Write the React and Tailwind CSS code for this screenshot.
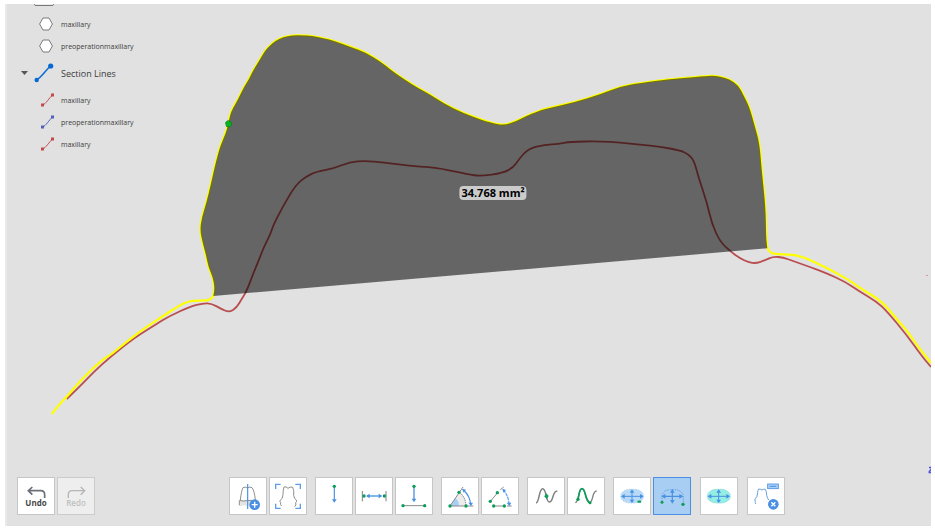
import React from "react";

const BLUE = "#4a90e2";
const GREEN = "#0a9d58";
const GRAY = "#8a8a8a";

const TAIL_LEFT =
  "51.7,414 60,403.5 66.7,397 80,381 101.7,360 110,355.5 130,339 146.7,326.7 163.3,316 180,305 186,302.3 193,300.7 206.7,300.7 211,299";

const OUTLINE =
  "213.3,296 214.3,291 214.3,286 213,278 208.3,266.7 206,255 202.7,243 200,230 201.7,218 206.7,201.7 210.7,185 214,170 217.3,156.7 220,146.7 225.7,133.3 228.3,124 230,115 232.7,108.3 238.3,99 244,86.7 249,79.3 252.3,71.7 260,59.3 265,50.7 270,45.5 275,41 283.3,37 292,35.5 301.7,35.2 312,36 323.3,38 335,41 351.7,47.3 365,52 381.7,62.3 390,69.3 404,79.3 420,89 430,94.3 443.3,103.3 463.3,113 483.3,120.3 495,123.9 505,125 515,121.7 526.7,115.7 536.7,111.7 545,108.7 573.3,102.7 600,94.3 620,86.5 640,83 670,79 696.7,77 711.7,75.6 720,76.5 730,79.6 738.3,85.2 743.3,95 749.3,106.7 755,126.7 759.5,143.3 761.7,170 765.7,208.3 766,236.7 767.3,248.3";

const TAIL_RIGHT =
  "770,252 773.3,254 793,254.7 801,256.5 810,260 830,269.5 850,280.7 860,288 876.7,298 886.7,306.7 896.7,319.3 906.7,330 916.7,345 931,363";

const RED_LINE =
  "66.7,399 78.3,388 93,372.7 111.7,355.7 135,337.3 155,325 170,315.7 190,306.7 203.3,303.1 211.7,303.5 221.7,309.3 229.3,312.2 236.7,307.6 241.7,299 246.7,291 253.3,273.3 260,257.3 263.3,248.3 270.7,233.3 273.3,225 283.3,205.7 296,184.500 306.7,176.2 316.7,171.5 333.3,168.7 350,161.8 365,160.8 383.3,162.3 410,166 430,167.3 440,168.3 468.3,174.3 480,176.2 503.3,173 513.3,167.3 518.3,160 528.3,148.500 545,144.7 558.3,144 570,141.7 600,141.3 620,142.5 640,144.7 660,146.7 680,150.3 688.3,154.300 694,160.300 698.3,176.7 706.7,201.7 711.7,223.3 720,241.7 730.7,251.7 740,258.3 748.3,262.3 756,263.400 765,260.3 773.3,256.500 783.3,257.5 793,261 810,267 826.7,273.3 845,281.7 860,291.7 876.7,301.7 886.7,311 906.7,335 921.7,356 931,367";

// Rounds a traced polyline by running quadratic segments through its midpoints.
function smooth(points) {
  const p = points.split(" ").map((pair) => pair.split(",").map(Number));
  let d = `M${p[0][0]} ${p[0][1]}`;
  for (let i = 1; i < p.length - 1; i++) {
    const mx = (p[i][0] + p[i + 1][0]) / 2;
    const my = (p[i][1] + p[i + 1][1]) / 2;
    d += `Q${p[i][0]} ${p[i][1]} ${mx} ${my}`;
  }
  const last = p[p.length - 1];
  return `${d}L${last[0]} ${last[1]}`;
}

function SectionDrawing() {
  return (
    <svg
      className="absolute inset-0 h-full w-full"
      viewBox="5 4 926 522"
      preserveAspectRatio="xMidYMid slice"
      fill="none"
      strokeLinejoin="round"
      aria-hidden="true"
    >
      <path d={smooth(RED_LINE)} stroke="#b94e50" strokeWidth="1.800" />
      <path d={smooth(`${TAIL_LEFT} ${OUTLINE} ${TAIL_RIGHT}`)} stroke="#ffff00" strokeWidth="2.200" />
      <path d={`${smooth(OUTLINE)}Z`} fill="#000" fillOpacity="0.55" />
      <path d="M225.500 122.500l2.500-2 3 1.500.500 3-2 2-3-.500z" fill="#04b81c" stroke="#067a16" strokeWidth=".7" />
      <path d="M926 275.500h2" stroke="#d39a9a" strokeWidth="1" />
      <path d="M929 467.500h4M932 468l-3 4M928.500 472.500h4" stroke="#5050e6" strokeWidth="1.400" />
    </svg>
  );
}

function MeshIcon() {
  return (
    <svg className="h-4 w-4 shrink-0" viewBox="0 0 16 16" aria-hidden="true">
      <path d="M4 2h6l3.400 6-3.400 6H4L.6 8z" fill="#fff" stroke="#7b7b7b" strokeWidth="1" />
    </svg>
  );
}

function LineIcon({ color }) {
  return (
    <svg className="h-4 w-4 shrink-0" viewBox="0 0 16 16" fill="none" aria-hidden="true">
      <path d="M3.500 13C7 12 10 6 13.500 3" stroke={color} strokeWidth="1" />
      <rect x="2" y="11.500" width="3" height="3" fill={color} />
      <rect x="12" y="1.500" width="3" height="3" fill={color} />
    </svg>
  );
}

function TreeItem({ icon, children }) {
  return (
    <li className="flex h-[22px] items-center gap-[6px] pl-[34px] text-[7px] leading-none">
      {icon}
      <span>{children}</span>
    </li>
  );
}

function Tree() {
  return (
    <nav aria-label="Data tree" className="relative text-[#3c3c3c]">
      <div className="h-[9px] overflow-hidden pl-[29px]">
        <svg className="block h-[2px] w-5" viewBox="0 0 20 2" fill="none" aria-hidden="true">
          <path d="M.5 0V.5Q.5 1.500 2 1.500H18Q19.500 1.500 19.500 .5V0" fill="#ededed" stroke="#777" />
        </svg>
      </div>
      <ul>
        <TreeItem icon={<MeshIcon />}>maxillary</TreeItem>
        <TreeItem icon={<MeshIcon />}>preoperationmaxillary</TreeItem>
      </ul>
      <div className="flex h-8 items-center pl-4">
        <button type="button" aria-label="Collapse Section Lines" aria-expanded="true" className="flex w-[13px]">
          <svg className="h-1 w-[7px]" viewBox="0 0 7 4" aria-hidden="true">
            <path d="M0 0h7L3.500 4z" fill="#555" />
          </svg>
        </button>
        <svg className="h-5 w-5 shrink-0" viewBox="0 0 20 20" fill="none" aria-hidden="true">
          <path d="M2.500 17C7 15 12 7 16.500 3" stroke="#0d6fd6" strokeWidth="1.600" />
          <circle cx="2.700" cy="17" r="2.200" fill="#0668d2" />
          <circle cx="16.700" cy="3" r="2.600" fill="#0668d2" />
        </svg>
        <span className="pl-[7px] text-[9px] leading-none">Section Lines</span>
      </div>
      <ul>
        <TreeItem icon={<LineIcon color="#c24a4a" />}>maxillary</TreeItem>
        <TreeItem icon={<LineIcon color="#5560b8" />}>preoperationmaxillary</TreeItem>
        <TreeItem icon={<LineIcon color="#c24a4a" />}>maxillary</TreeItem>
      </ul>
    </nav>
  );
}

function Dot({ x, y, r = 5 }) {
  return <circle cx={x} cy={y} r={r} fill={GREEN} />;
}

const TOOLS = [
  [
    {
      label: "Add section",
      box: "30 24 108 108",
      art: (
        <>
          <path d="M59 91h46v15q-12 4-24 1-12-2-22 1z" fill="#e4e4e4" />
          <path d="M58 91q12 4 24 1 12-2 25 1M61 90q3-28 8-37 7-4 13 1 7-5 14-1 7 8 10 37M58 92v14" stroke="#777" strokeWidth="2.500" />
          <path d="M83 42v75" stroke={BLUE} strokeWidth="3.500" />
          <circle cx="104" cy="104" r="16" fill={BLUE} />
          <path d="M104 95v18M95 104h18" stroke="#fff" strokeWidth="4" />
        </>
      ),
    },
    {
      label: "Fit section to view",
      box: "147 24 108 108",
      art: (
        <>
          <path d="M164 57V43h15M223 43h15v14M238 101v14h-15M179 115h-15v-14" stroke="#5b9eea" strokeWidth="4" />
          <path d="M182 108q-5-4-3-10-4-2-1-8 7-2 8-16 0-16 3-23 6-3 12 4 7-6 14-3 5 8 3 24 2 12 8 14 2 5-2 8 3 8-3 12" stroke="#777" strokeWidth="2.500" />
        </>
      ),
    },
  ],
  [
    {
      label: "Vertical distance",
      box: "288 24 108 108",
      art: (
        <>
          <path d="M343 50v44" stroke={BLUE} strokeWidth="3.500" />
          <path d="M336 88h14l-7 10z" fill={BLUE} />
          <Dot x="343" y="49" />
        </>
      ),
    },
    {
      label: "Horizontal distance",
      box: "16 24 108 108",
      art: (
        <>
          <path d="M35 63v31M106 63v31" stroke="#666" strokeWidth="2.500" />
          <path d="M49 78h42" stroke={BLUE} strokeWidth="4" />
          <path d="M57 71v14l-11-7zM84 71v14l11-7z" fill={BLUE} />
          <Dot x="40" y="78" />
          <Dot x="101" y="78" />
        </>
      ),
    },
    {
      label: "Point to line distance",
      box: "134 24 108 108",
      art: (
        <>
          <path d="M155 107h65" stroke={GRAY} strokeWidth="3" />
          <path d="M188 50v42" stroke={BLUE} strokeWidth="4" />
          <path d="M181 86h14l-7 11z" fill={BLUE} />
          <Dot x="188" y="49" />
          <Dot x="155" y="107" />
          <Dot x="220" y="107" />
        </>
      ),
    },
  ],
  [
    {
      label: "Three point angle",
      box: "275 24 108 108",
      art: (
        <>
          <path d="M300 108l27-41q19 12 20 41z" fill="#ececec" />
          <path d="M300 108l15-24q11 8 11 24z" fill="#a6cff5" />
          <path d="M299 108l39-57M299 108h70" stroke={GRAY} strokeWidth="3" />
          <path d="M327 67q19 14 20 41" stroke="#666" strokeWidth="3" strokeDasharray="4 3" />
          <path d="M339 60q20 17 22 44" stroke={BLUE} strokeWidth="3.500" />
          <path d="M335 56l12 3-7 9zM354 98h14l-6 10z" fill={BLUE} />
          <Dot x="299" y="108" />
          <Dot x="326" y="67" />
          <Dot x="347" y="108" />
        </>
      ),
    },
    {
      label: "Four point angle",
      box: "393 24 108 108",
      art: (
        <>
          <path d="M418 94l22-26M448 59l10-8M428 108h32M468 108h14" stroke={GRAY} strokeWidth="3" />
          <path d="M457 60q15 17 17 40" stroke="#5b9eea" strokeWidth="3.500" strokeDasharray="10 2" />
          <path d="M454 56l11 4-8 8zM467 98h14l-6 10z" fill={BLUE} />
          <Dot x="439" y="68" />
          <Dot x="418" y="94" />
          <Dot x="428" y="108" />
          <Dot x="460" y="108" />
        </>
      ),
    },
  ],
  [
    {
      label: "Curve point",
      box: "55 24 108 108",
      art: (
        <>
          <path d="M79 99c11-2 8-43 20-43 12 0 9 40 20 40 13 0 8-33 24-33" stroke="#808080" strokeWidth="4.500" />
          <path d="M110 71l6 7-5 8-6-7z" fill={GREEN} stroke={GREEN} strokeWidth="2" />
        </>
      ),
    },
    {
      label: "Curve length",
      box: "174 24 108 108",
      art: (
        <>
          <path d="M196 98c12-2 8-42 20-42 12 0 9 40 22 42 13-1 7-35 22-35" stroke="#808080" strokeWidth="4" />
          <path d="M204 87c4-14 4-31 12-31 11 0 9 34 23 42" stroke={GREEN} strokeWidth="5" />
          <Dot x="204" y="88" />
          <Dot x="240" y="98" r="4.500" />
        </>
      ),
    },
  ],
  [
    {
      label: "Outline by points",
      box: "314 24 108 108",
      art: (
        <>
          <rect x="334" y="58" width="69" height="41" rx="28" ry="20" fill="#b9daf7" stroke="#9cc9f2" strokeWidth="2" strokeDasharray="5 3" />
          <path d="M341 79h56M368 62v32" stroke={BLUE} strokeWidth="3" />
          <path d="M346 72v14l-11-7zM392 72v14l11-7zM361 68h14l-7-10zM361 89h14l-7 10z" fill={BLUE} />
          <ellipse cx="390" cy="95" rx="6" ry="3.500" fill={GREEN} />
        </>
      ),
    },
    {
      label: "Area between two points",
      active: true,
      box: "43 24 108 108",
      art: (
        <>
          <path d="M67 94V80q1-20 25-21h12q26 1 27 22v20" stroke={BLUE} strokeWidth="2.500" strokeDasharray="4 3" />
          <path d="M72 79h52M98 62v34" stroke={BLUE} strokeWidth="3.500" />
          <path d="M77 72v14l-12-7zM119 72v14l12-7zM91 68h14l-7-11zM91 90h14l-7 11z" fill={BLUE} />
          <Dot x="67" y="97" r="4.500" />
          <Dot x="130" y="103" />
        </>
      ),
    },
  ],
  [
    {
      label: "Closed area",
      spaced: true,
      box: "184 24 108 108",
      art: (
        <>
          <rect x="203" y="58" width="69" height="41" rx="28" ry="20" fill="#93eee4" stroke="#86d9dc" strokeWidth="2" />
          <path d="M210 79h54M237 62v32" stroke={BLUE} strokeWidth="3" />
          <path d="M215 72v14l-11-7zM260 72v14l11-7zM230 68h14l-7-10zM230 89h14l-7 10z" fill={BLUE} />
        </>
      ),
    },
  ],
  [
    {
      label: "Clear measurements",
      spaced: true,
      box: "326 24 108 108",
      art: (
        <>
          <path d="M350 102q-4-4-2-8-3-4 0-8 6-4 7-18 0-8 3-11 6 0 10 3 5-4 10-2 4 6 4 18 2 8 6 14" stroke="#6b9fdb" strokeWidth="3" />
          <rect x="385" y="42" width="32" height="14" fill="#a9d0f5" stroke={BLUE} strokeWidth="2.500" />
          <path d="M391 49h20" stroke={BLUE} strokeWidth="3" />
          <circle cx="402" cy="103" r="16" fill={BLUE} />
          <path d="M396 97l12 12M408 97l-12 12" stroke="#fff" strokeWidth="4" />
        </>
      ),
    },
  ],
];

function ToolButton({ tool }) {
  const tone = tool.active ? "border-[#4a90e2] bg-[#a8cff3]" : "border-[#c6c6c6] bg-white";
  const margin = tool.spaced ? "ml-px" : "";
  return (
    <button
      type="button"
      title={tool.label}
      aria-label={tool.label}
      aria-pressed={!!tool.active}
      className={`h-[38px] w-[38px] border ${tone} ${margin}`}
    >
      <svg className="block h-9 w-9" viewBox={tool.box} fill="none" aria-hidden="true">
        {tool.art}
      </svg>
    </button>
  );
}

function Toolbar() {
  return (
    <div className="relative flex items-center px-3 pb-[11px]">
      <div className="flex gap-[2px] text-[8px] leading-[10px]">
        <button
          type="button"
          className="flex h-[38px] w-[38px] flex-col items-center border border-[#c6c6c6] bg-white pt-2 font-bold text-[#484848]"
        >
          <svg className="h-3 w-[19px]" viewBox="83 64 57 36" fill="none" aria-hidden="true">
            <path d="M99 67L87 78l12 12M88 78h36q12 0 12 12v10" stroke="#6d6f78" strokeWidth="5" />
          </svg>
          Undo
        </button>
        <button
          type="button"
          disabled
          className="flex h-[38px] w-[38px] flex-col items-center border border-[#cbcbcb] bg-[#eeeeee] pt-2 font-semibold text-[#c0c0c0]"
        >
          <svg className="h-3 w-[19px]" viewBox="202 64 57 36" fill="none" aria-hidden="true">
            <path d="M243 67l12 11-12 12M254 78h-36q-12 0-12 12v10" stroke="#b5b5b5" strokeWidth="4" />
          </svg>
          Redo
        </button>
      </div>
      <div role="toolbar" aria-label="Measurement tools" className="flex flex-1 justify-center gap-2">
        {TOOLS.map((group) => (
          <div key={group[0].label} className="flex gap-[2px]">
            {group.map((tool) => (
              <ToolButton key={tool.label} tool={tool} />
            ))}
          </div>
        ))}
      </div>
    </div>
  );
}

export default function App() {
  return (
    <div className="flex h-screen bg-white pt-1 pr-1 pb-[3px] pl-[5px] font-['Open_Sans','Noto_Sans',sans-serif]">
      <main className="relative flex flex-1 flex-col justify-between overflow-hidden bg-[#e1e1e1]">
        <SectionDrawing />
        <div className="absolute inset-y-0 left-0 w-[2px] bg-[#e9e9e9]" />
        <output className="absolute top-[36.2%] left-[52.7%] -translate-x-1/2 -translate-y-1/2 rounded bg-[#cbcbcb] px-[2px] text-[11px] leading-[14px] font-bold whitespace-nowrap text-black">
          34.768 mm²
        </output>
        <Tree />
        <Toolbar />
      </main>
    </div>
  );
}
